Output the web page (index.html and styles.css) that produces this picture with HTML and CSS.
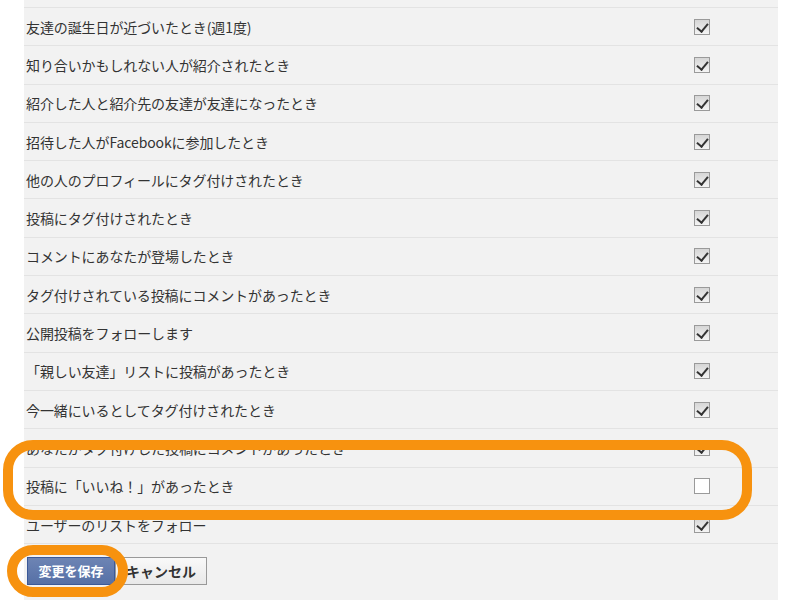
FILE: index.html
```html
<!DOCTYPE html>
<html lang="ja">
<head>
<meta charset="utf-8">
<link rel="stylesheet" href="styles.css">
</head>
<body>
<div class="panel">
  <ul class="list">
    <li class="row"><span class="label"></span></li>
    <li class="row"><span class="label">友達の誕生日が近づいたとき(週1度)</span><span class="cb on"></span></li>
    <li class="row"><span class="label">知り合いかもしれない人が紹介されたとき</span><span class="cb on"></span></li>
    <li class="row"><span class="label">紹介した人と紹介先の友達が友達になったとき</span><span class="cb on"></span></li>
    <li class="row"><span class="label">招待した人がFacebookに参加したとき</span><span class="cb on"></span></li>
    <li class="row"><span class="label">他の人のプロフィールにタグ付けされたとき</span><span class="cb on"></span></li>
    <li class="row"><span class="label">投稿にタグ付けされたとき</span><span class="cb on"></span></li>
    <li class="row"><span class="label">コメントにあなたが登場したとき</span><span class="cb on"></span></li>
    <li class="row"><span class="label">タグ付けされている投稿にコメントがあったとき</span><span class="cb on"></span></li>
    <li class="row"><span class="label">公開投稿をフォローします</span><span class="cb on"></span></li>
    <li class="row"><span class="label">「親しい友達」リストに投稿があったとき</span><span class="cb on"></span></li>
    <li class="row"><span class="label">今一緒にいるとしてタグ付けされたとき</span><span class="cb on"></span></li>
    <li class="row"><span class="label">あなたがタグ付けした投稿にコメントがあったとき</span><span class="cb on"></span></li>
    <li class="row"><span class="label">投稿に「いいね！」があったとき</span><span class="cb"></span></li>
    <li class="row"><span class="label">ユーザーのリストをフォロー</span><span class="cb on"></span></li>
  </ul>
  <div class="actions">
    <button class="btn primary">変更を保存</button>
    <button class="btn">キャンセル</button>
  </div>
</div>
<div class="ring ring-row"></div>
<div class="ring ring-btn"></div>
</body>
</html>
```

FILE: styles.css
```css
html, body {
  margin: 0;
  padding: 0;
  background: #ffffff;
  height: 100%;
  overflow: hidden;
}
body {
  font-family: "Noto Sans CJK JP", "Noto Sans", sans-serif;
  color: #333333;
  font-size: 14px;
}
.panel {
  margin-left: 24px;
  width: 754px;
  height: 600px;
  background: #f2f2f2;
}
.list {
  list-style: none;
  margin: 0;
  padding: 0;
  border-bottom: 1px solid #e3e3e3;
}
.row {
  display: flex;
  align-items: center;
  justify-content: space-between;
  height: 38.3px;
  box-sizing: border-box;
  border-top: 1px solid #e3e3e3;
  padding: 0 68px 0 2px;
}
.row:first-child {
  height: 7px;
  border-top: none;
}
.label {
  line-height: 1;
  letter-spacing: -0.1px;
}
.cb {
  width: 16px;
  height: 16px;
  box-sizing: border-box;
  border: 1px solid #9a9a9a;
  background: #ffffff;
  position: relative;
}
.cb.on {
  background: linear-gradient(#d6d6d6, #f4f4f4);
}
.cb.on::after {
  content: "";
  position: absolute;
  left: 4px;
  top: 1px;
  width: 5px;
  height: 9px;
  border-right: 2.5px solid #333;
  border-bottom: 2.5px solid #333;
  transform: rotate(40deg);
}
.actions {
  display: flex;
  gap: 0;
  padding: 13px 0 0 3px;
}
.btn {
  font-family: "Noto Sans CJK JP", sans-serif;
  font-size: 13px;
  font-weight: bold;
  height: 28px;
  box-sizing: border-box;
  padding: 0 9px;
  border: 1px solid #999999;
  background: linear-gradient(#f9f9f9, #e9e9e9);
  color: #333333;
  line-height: 26px;
  margin: 0;
}
.btn.primary {
  width: 88px;
  background: linear-gradient(#6d84b4, #5670a6);
  border-color: #3b5998;
  color: #ffffff;
}
.btn:not(.primary) {
  width: 92px;
  font-size: 14px;
  margin-left: 0;
}
.ring {
  position: absolute;
  border: 10px solid #f7920f;
  box-sizing: border-box;
}
.ring-row {
  left: 3px;
  top: 440px;
  width: 749px;
  height: 80px;
  border-radius: 30px;
}
.ring-btn {
  left: 7px;
  top: 545px;
  width: 121px;
  height: 52px;
  border-radius: 26px;
}
```
